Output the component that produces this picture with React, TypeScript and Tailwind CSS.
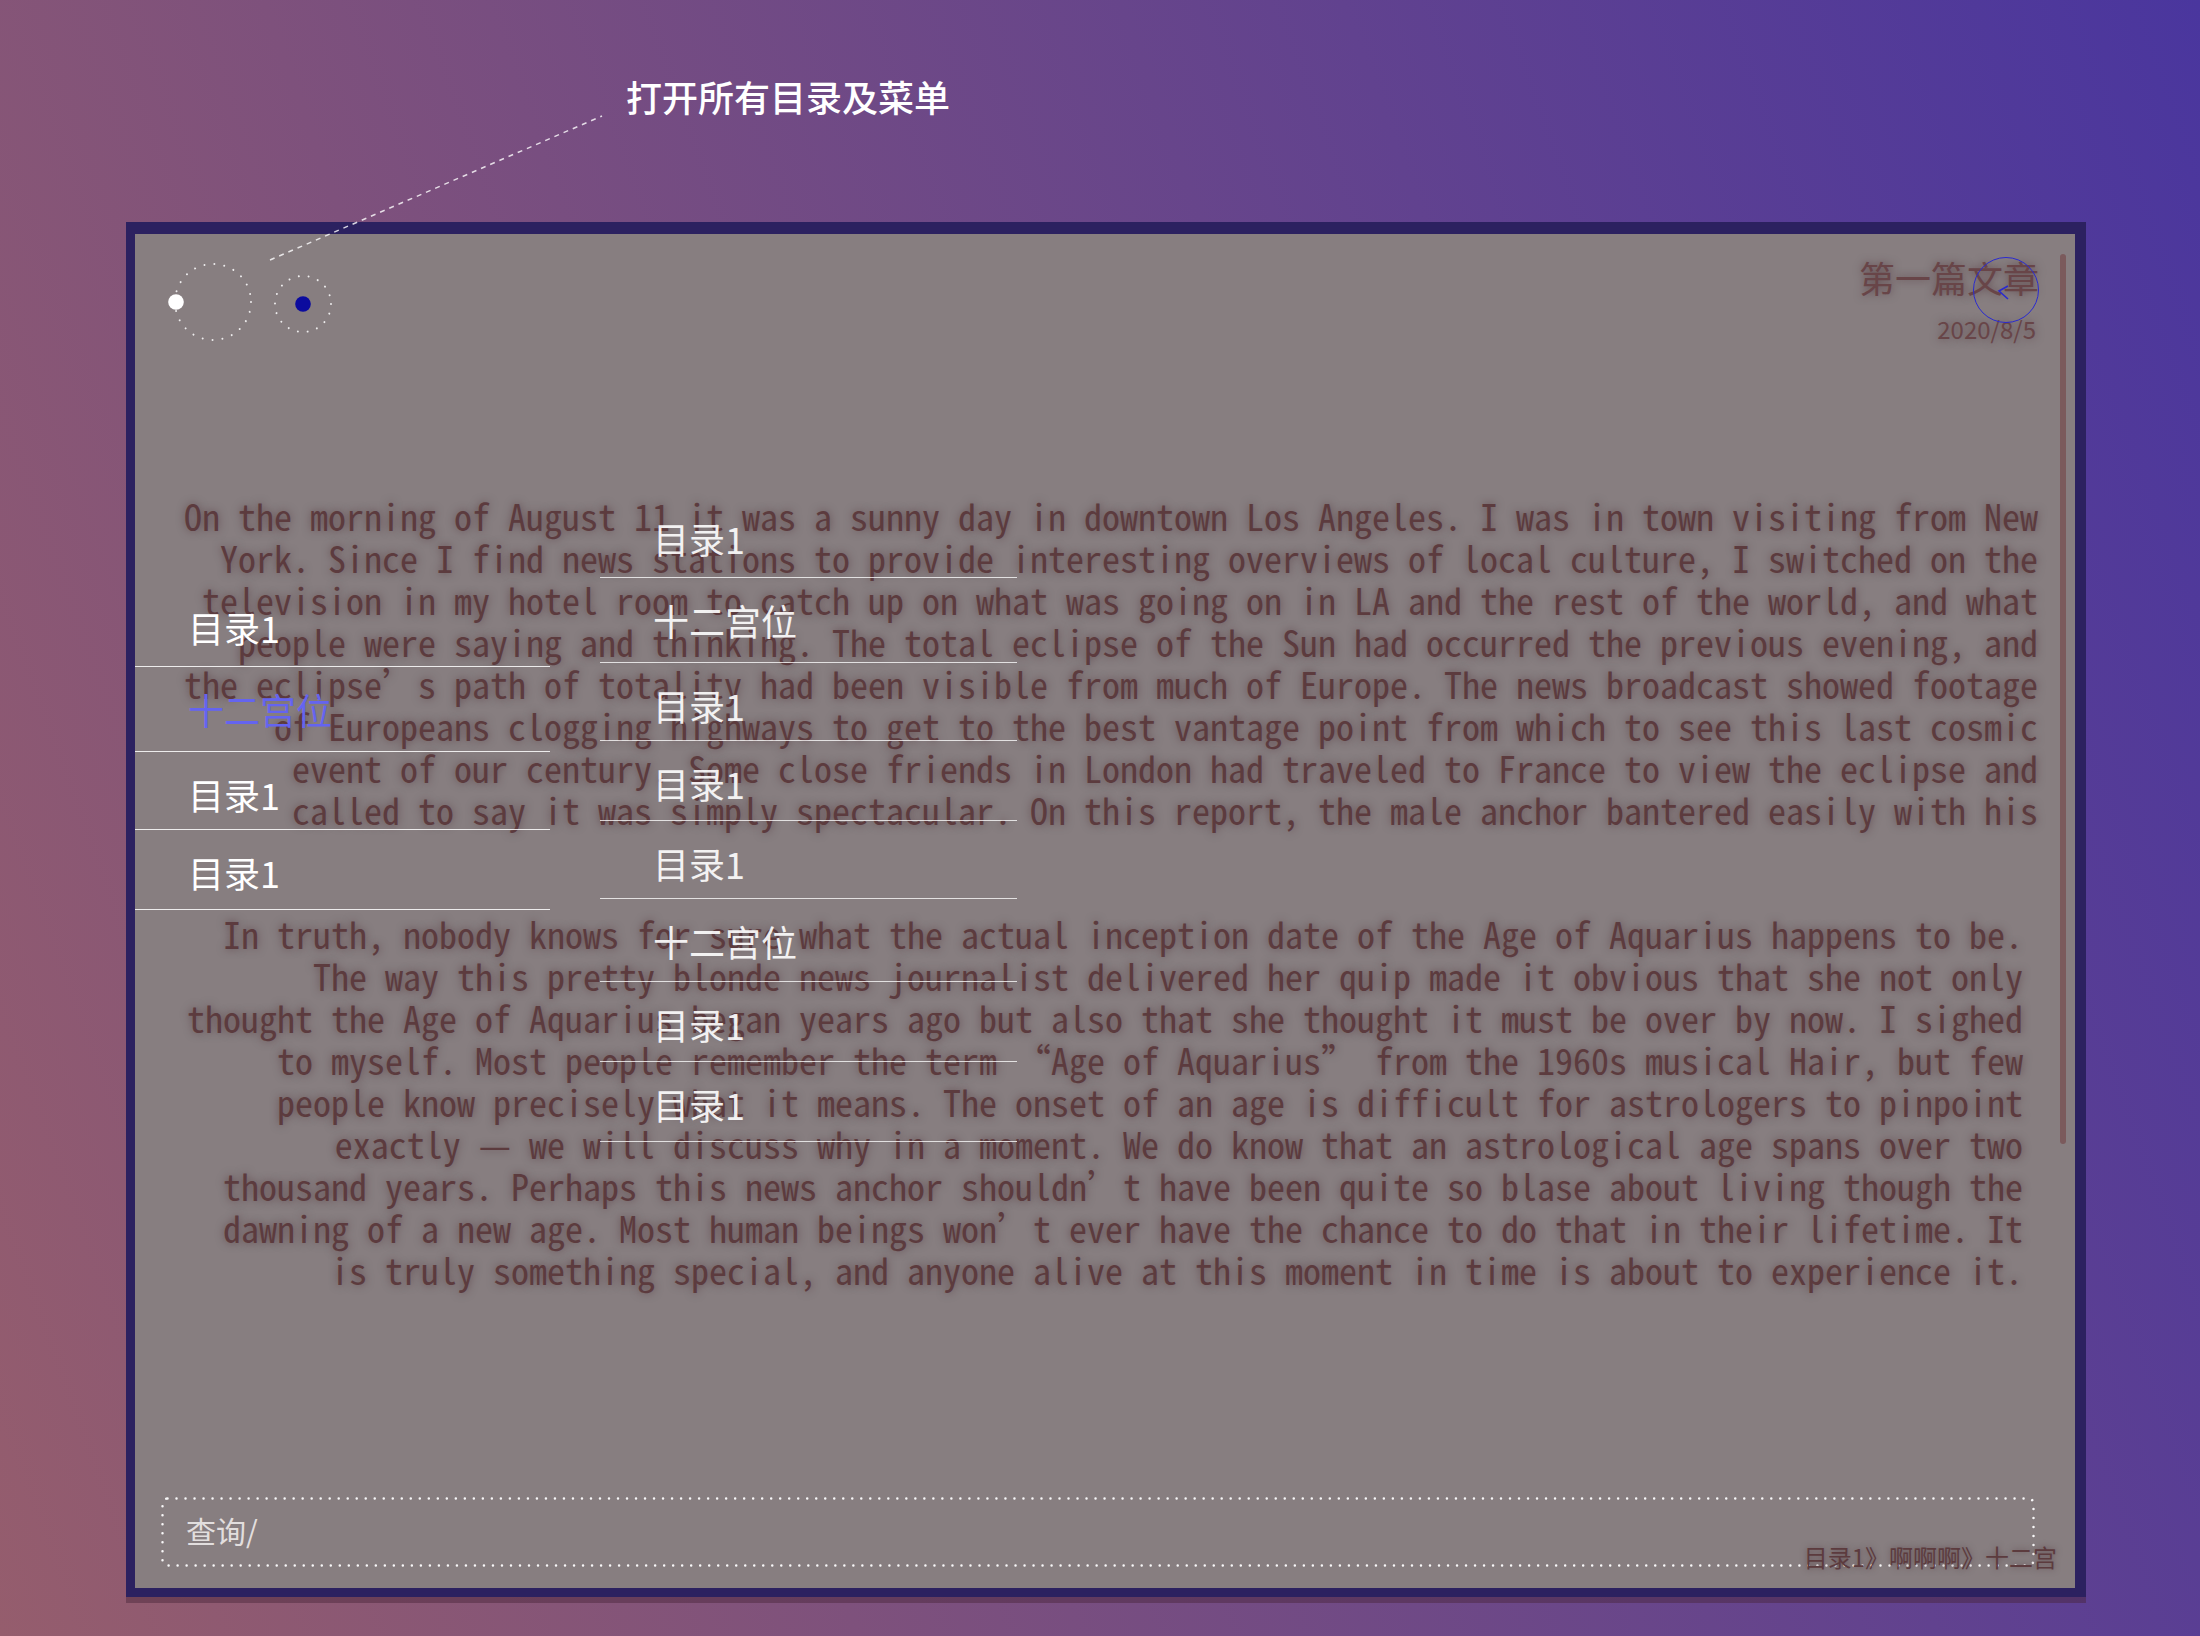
import React from 'react';

const para1 = [
  'On the morning of August 11 it was a sunny day in downtown Los Angeles. I was in town visiting from New',
  'York. Since I find news stations to provide interesting overviews of local culture, I switched on the',
  'television in my hotel room to catch up on what was going on in LA and the rest of the world, and what',
  'people were saying and thinking. The total eclipse of the Sun had occurred the previous evening, and',
  'the eclipse’s path of totality had been visible from much of Europe. The news broadcast showed footage',
  'of Europeans clogging highways to get to the best vantage point from which to see this last cosmic',
  'event of our century. Some close friends in London had traveled to France to view the eclipse and',
  'called to say it was simply spectacular. On this report, the male anchor bantered easily with his',
];

const para2 = [
  'In truth, nobody knows for sure what the actual inception date of the Age of Aquarius happens to be.',
  'The way this pretty blonde news journalist delivered her quip made it obvious that she not only',
  'thought the Age of Aquarius began years ago but also that she thought it must be over by now. I sighed',
  'to myself. Most people remember the term “Age of Aquarius” from the 1960s musical Hair, but few',
  'people know precisely what it means. The onset of an age is difficult for astrologers to pinpoint',
  'exactly — we will discuss why in a moment. We do know that an astrological age spans over two',
  'thousand years. Perhaps this news anchor shouldn’t have been quite so blase about living though the',
  'dawning of a new age. Most human beings won’t ever have the chance to do that in their lifetime. It',
  'is truly something special, and anyone alive at this moment in time is about to experience it.',
];

interface MenuItem {
  label: string;
  h: string;
  active?: boolean;
}

const leftMenu: MenuItem[] = [
  { label: '目录1', h: 'h-[82px]' },
  { label: '十二宫位', h: 'h-[85px]', active: true },
  { label: '目录1', h: 'h-[78px]' },
  { label: '目录1', h: 'h-[80px]' },
];

const rightMenu: MenuItem[] = [
  { label: '目录1', h: 'h-[82px]' },
  { label: '十二宫位', h: 'h-[85px]' },
  { label: '目录1', h: 'h-[78px]' },
  { label: '目录1', h: 'h-[80px]' },
  { label: '目录1', h: 'h-[78px]' },
  { label: '十二宫位', h: 'h-[83px]' },
  { label: '目录1', h: 'h-[80px]' },
  { label: '目录1', h: 'h-[80px]' },
];

const MenuList = ({ items, className }: { items: MenuItem[]; className: string }) => (
  <ul className={className}>
    {items.map((item, i) => (
      <li
        key={i}
        className={`${item.h} border-b border-white/85 pl-[53px] pt-[24px] text-[36px] leading-[36px] ${
          item.active ? 'text-[#6464f0]' : 'text-white'
        }`}
      >
        {item.label}
      </li>
    ))}
  </ul>
);

export default function App() {
  return (
    <div
      className="relative h-[1636px] w-[2200px] overflow-hidden bg-[linear-gradient(70deg,#955d6d,#4a369e)]"
      style={{ fontFamily: '"Noto Sans CJK SC", "Noto Sans", sans-serif' }}
    >
      {/* annotation */}
      <div className="h-[222px] pl-[626px] pt-[78px]">
        <span className="text-[36px] font-medium leading-[36px] text-white">打开所有目录及菜单</span>
      </div>

      {/* frame */}
      <div className="ml-[126px] h-[1375px] w-[1960px] border-b-[9px] border-l-[9px] border-r-[11px] border-t-[12px] border-[#2c2160] shadow-[0_6px_0_rgba(70,35,55,0.45)]">
        <div className="relative flex h-full flex-col bg-[#877e80]">
          {/* header */}
          <div className="flex h-[130px] items-start justify-between pl-[30px] pr-[36px] pt-[20px]">
            <svg width="180" height="100" viewBox="0 0 180 100">
              <circle cx="48" cy="48" r="38" fill="none" stroke="white" strokeOpacity="0.85" strokeWidth="2" strokeLinecap="round" strokeDasharray="0.01 10" />
              <circle cx="138" cy="50" r="28" fill="none" stroke="white" strokeOpacity="0.85" strokeWidth="2" strokeLinecap="round" strokeDasharray="0.01 9.8" />
              <circle cx="11" cy="48" r="7.8" fill="white" />
              <circle cx="138" cy="50" r="7.8" fill="#0b0b9e" />
            </svg>
            <div className="flex flex-col items-end text-[#684548] [text-shadow:0_0_8px_rgba(70,40,45,0.6)]">
              <h1 className="mt-[5px] text-[36px] leading-[36px]">第一篇文章</h1>
              <p className="mr-[3px] mt-[22px] text-[24px] leading-[24px]">2020/8/5</p>
            </div>
          </div>

          {/* article */}
          <article
            className="pr-[37px] pt-[130px] text-right text-[36px] leading-[42px] text-[#5c3b3e] [text-shadow:0_0_8px_rgba(70,40,45,0.6)]"
            style={{ fontFamily: '"Noto Sans Mono CJK SC", "Liberation Mono", monospace' }}
          >
            <p>
              {para1.map((l, i) => (
                <span key={i} className="block whitespace-pre">{l}</span>
              ))}
            </p>
            <p className="mt-[82px] pr-[15px]">
              {para2.map((l, i) => (
                <span key={i} className="block whitespace-pre">{l}</span>
              ))}
            </p>
          </article>

          {/* search */}
          <div className="relative mb-[21px] ml-[26px] mr-[40px] mt-auto flex h-[70px] items-center pb-[4px] pl-[25px]">
            <svg className="absolute inset-0 h-full w-full" preserveAspectRatio="none">
              <rect x="1.5" y="1.5" width="calc(100% - 3px)" height="calc(100% - 3px)" rx="5" fill="none" stroke="white" strokeOpacity="0.95" strokeWidth="2.5" strokeLinecap="round" strokeDasharray="0.01 9" />
            </svg>
            <span className="text-[30px] leading-[30px] text-[#e2dede]">查询/</span>
          </div>

          {/* breadcrumb */}
          <div className="absolute bottom-[19px] right-[18px] text-[24px] leading-[24px] text-[#5c3b3e] [text-shadow:0_0_6px_rgba(70,40,45,0.55)]">
            目录1》啊啊啊》十二宫
          </div>

          {/* back button */}
          <button className="absolute left-[1838px] top-[23px] h-[66px] w-[66px] rounded-full border-[1.5px] border-[#2a2ad0]">
            <svg className="absolute left-0 top-0" width="63" height="63" viewBox="0 0 63 63">
              <polyline points="34,28 25,33 34,41" fill="none" stroke="#2a2ad0" strokeWidth="1.6" />
            </svg>
          </button>

          {/* scrollbar */}
          <div className="absolute left-[1925px] top-[20px] h-[890px] w-[6px] rounded-full bg-[#7b5a5c]" />

          {/* menus */}
          <MenuList items={leftMenu} className="absolute left-0 top-[351px] w-[415px]" />
          <MenuList items={rightMenu} className="absolute left-[465px] top-[262px] w-[417px] opacity-90" />
        </div>
      </div>

      {/* leader line */}
      <svg className="pointer-events-none absolute left-0 top-0" width="2200" height="400">
        <line x1="270" y1="260" x2="602" y2="116" stroke="white" strokeOpacity="0.8" strokeWidth="1.5" strokeDasharray="5 5" />
      </svg>
    </div>
  );
}
